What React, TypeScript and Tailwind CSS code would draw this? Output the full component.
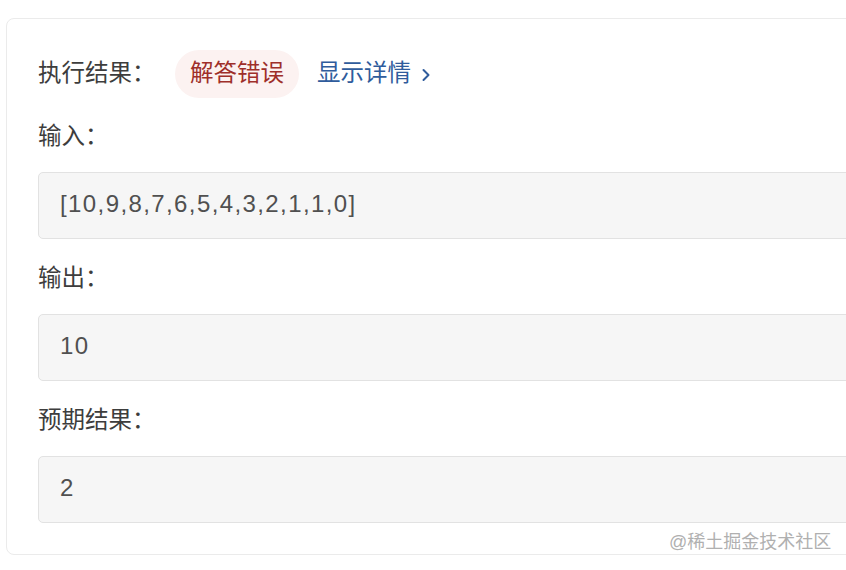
import React from "react";

const cjk = '"Liberation Sans", "Noto Sans CJK SC", sans-serif';

function Label({ children }: { children: React.ReactNode }) {
  return (
    <div className="h-[24px] leading-[24px] text-[23.5px] text-[#3d3d3d]" style={{ fontFamily: cjk }}>
      {children}
    </div>
  );
}

function Box({ children }: { children: React.ReactNode }) {
  return (
    <div className="h-[67px] rounded-[5px] border border-[#e2e2e2] bg-[#f6f6f6] flex items-center pl-[21px] pb-[3px]">
      <span className="text-[24px] tracking-[1.4px] text-[#505050]" style={{ fontFamily: cjk }}>
        {children}
      </span>
    </div>
  );
}

export default function App() {
  return (
    <div className="w-[846px] h-[570px] overflow-hidden bg-white relative">
      <div className="ml-[6px] mt-[18px] w-[900px] h-[537px] rounded-[8px] border-[1.5px] border-[#ebebeb] bg-white pl-[31px] pr-[40px] pt-[31px]">
        <div className="flex items-center h-[48px]" style={{ fontFamily: cjk }}>
          <span className="text-[23.5px] text-[#3d3d3d] w-[137px]">执行结果：</span>
          <span className="h-[48px] px-[15px] rounded-full bg-[#fcf2f1] text-[#9e2f2a] text-[23.5px] flex items-center">
            解答错误
          </span>
          <span className="ml-[18px] text-[23.5px] text-[#2f5c9c] flex items-center">
            显示详情
            <svg width="10" height="14" viewBox="0 0 10 14" className="ml-[10px] mt-[1px]">
              <path d="M2.5 2 L7.5 7 L2.5 12" fill="none" stroke="#2f5c9c" strokeWidth="2" strokeLinecap="round" strokeLinejoin="round" />
            </svg>
          </span>
        </div>
        <div className="mt-[26px]">
          <Label>输入：</Label>
        </div>
        <div className="mt-[24px]">
          <Box>[10,9,8,7,6,5,4,3,2,1,1,0]</Box>
        </div>
        <div className="mt-[27px]">
          <Label>输出：</Label>
        </div>
        <div className="mt-[24px]">
          <Box>10</Box>
        </div>
        <div className="mt-[27px]">
          <Label>预期结果：</Label>
        </div>
        <div className="mt-[24px]">
          <Box>2</Box>
        </div>
      </div>
      <div
        className="absolute left-[669px] top-[530px] text-[18px] leading-[24px] text-[#b0b0b0]"
        style={{ fontFamily: cjk, textShadow: "0 0 2px #fff" }}
      >
        @稀土掘金技术社区
      </div>
    </div>
  );
}
